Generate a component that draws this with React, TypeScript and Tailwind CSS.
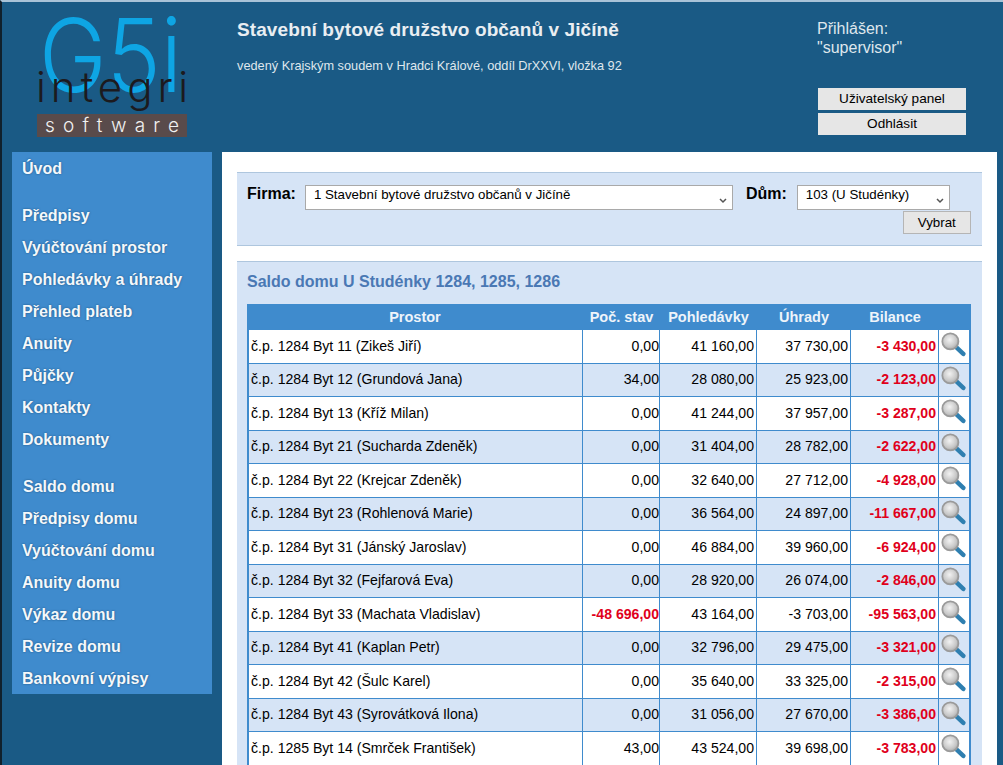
import clsx from "clsx"

const menuTop = ["Předpisy", "Vyúčtování prostor", "Pohledávky a úhrady", "Přehled plateb", "Anuity", "Půjčky", "Kontakty", "Dokumenty"]
const menuHouse = ["Saldo domu", "Předpisy domu", "Vyúčtování domu", "Anuity domu", "Výkaz domu", "Revize domu", "Bankovní výpisy"]

const rows = [
  ["č.p. 1284 Byt 11 (Zikeš Jiří)", "0,00", "41 160,00", "37 730,00", "-3 430,00"],
  ["č.p. 1284 Byt 12 (Grundová Jana)", "34,00", "28 080,00", "25 923,00", "-2 123,00"],
  ["č.p. 1284 Byt 13 (Kříž Milan)", "0,00", "41 244,00", "37 957,00", "-3 287,00"],
  ["č.p. 1284 Byt 21 (Sucharda Zdeněk)", "0,00", "31 404,00", "28 782,00", "-2 622,00"],
  ["č.p. 1284 Byt 22 (Krejcar Zdeněk)", "0,00", "32 640,00", "27 712,00", "-4 928,00"],
  ["č.p. 1284 Byt 23 (Rohlenová Marie)", "0,00", "36 564,00", "24 897,00", "-11 667,00"],
  ["č.p. 1284 Byt 31 (Jánský Jaroslav)", "0,00", "46 884,00", "39 960,00", "-6 924,00"],
  ["č.p. 1284 Byt 32 (Fejfarová Eva)", "0,00", "28 920,00", "26 074,00", "-2 846,00"],
  ["č.p. 1284 Byt 33 (Machata Vladislav)", "-48 696,00", "43 164,00", "-3 703,00", "-95 563,00"],
  ["č.p. 1284 Byt 41 (Kaplan Petr)", "0,00", "32 796,00", "29 475,00", "-3 321,00"],
  ["č.p. 1284 Byt 42 (Šulc Karel)", "0,00", "35 640,00", "33 325,00", "-2 315,00"],
  ["č.p. 1284 Byt 43 (Syrovátková Ilona)", "0,00", "31 056,00", "27 670,00", "-3 386,00"],
  ["č.p. 1285 Byt 14 (Smrček František)", "43,00", "43 524,00", "39 698,00", "-3 783,00"],
]

// logo keeps its own canvas, the three words overlap on purpose like in the original
const Logo = () => (
  <svg width="156" height="140" viewBox="0 0 156 140" className="block">
    <text x="3" y="90" fill="#0ea5e4" fontSize="102" fontFamily="Inter, sans-serif" fontWeight="300" textLength="143" lengthAdjust="spacingAndGlyphs">
      G5i
    </text>
    <text x="0" y="100" fill="#1c1a1e" fontSize="42" fontFamily="Inter, sans-serif" fontWeight="300" textLength="152" lengthAdjust="spacing">
      integri
    </text>
    <rect x="1" y="112" width="150" height="23" fill="#594b4b" />
    <text x="9" y="130" fill="#f1f1f1" fontSize="19" fontFamily="Inter, sans-serif" fontWeight="300" textLength="134" lengthAdjust="spacing">
      software
    </text>
  </svg>
)

const MagnifierIcon = () => (
  <svg width="25" height="25" viewBox="0 0 28 28" className="block">
    <defs>
      <radialGradient id="glass" cx="45%" cy="40%" r="60%">
        <stop offset="0%" stopColor="#f2f2f2" />
        <stop offset="70%" stopColor="#c8c8c8" />
        <stop offset="100%" stopColor="#a9a9a9" />
      </radialGradient>
    </defs>
    <line x1="17" y1="17" x2="25" y2="24.5" stroke="#2f7fb0" strokeWidth="5" strokeLinecap="round" />
    <circle cx="10.5" cy="10.5" r="9" fill="url(#glass)" stroke="#9a9a9a" strokeWidth="2" />
  </svg>
)

const Chevron = () => (
  <svg width="8" height="6" viewBox="0 0 8 6" className="absolute right-[5px] top-[12px]">
    <path d="M1 1l3 3 3-3" fill="none" stroke="#555" strokeWidth="1.5" />
  </svg>
)

const MenuItem = ({ label, extra }: { label: string; extra?: boolean }) => (
  <div className={clsx("flex h-8 items-center text-base font-bold text-[#f4f8fb] [text-shadow:0_0_2px_#1a4f7c]", extra ? "pl-[11px]" : "pl-[10px]")}>
    {label}
  </div>
)

export default function App() {
  return (
    <div className="h-[765px] overflow-hidden border-t-2 border-l-2 border-t-[#a9c3d8] border-l-[#10202c] bg-[#1a5a85] font-['Liberation_Sans',Arial,sans-serif]">
      <header className="flex h-[150px]">
        <div className="w-[235px] pl-[34px]">
          <Logo />
        </div>
        <div className="w-[580px] pt-[17px]">
          <h1 className="text-[19px] leading-[22px] font-bold tracking-[0.1px] text-[#e9eef2]">Stavební bytové družstvo občanů v Jičíně</h1>
          <p className="mt-[18px] text-[12.75px] leading-[14px] text-[#dfe7ed]">vedený Krajským soudem v Hradci Králové, oddíl DrXXVI, vložka 92</p>
        </div>
        <div className="pt-[17px]">
          <div className="text-base leading-[19px] text-[#dfe7ed]">
            Přihlášen:
            <br />
            "supervisor"
          </div>
          <div className="mt-[31px] flex flex-col gap-[3px] pl-px">
            <button type="button" className="h-[22px] w-[148px] bg-[#e6e6e6] pt-px text-[13.6px] text-black">Uživatelský panel</button>
            <button type="button" className="h-[22px] w-[148px] bg-[#e6e6e6] pt-px text-[13.6px] text-black">Odhlásit</button>
          </div>
        </div>
      </header>

      <div className="flex items-start pl-[10px]">
        <nav className="h-[542px] w-[200px] bg-[#3f8bcd] pt-px">
          <MenuItem label="Úvod" />
          <div className="mt-[15px]">
            {menuTop.map((m) => (
              <MenuItem key={m} label={m} />
            ))}
          </div>
          <div className="mt-[15px]">
            {menuHouse.map((m, i) => (
              <MenuItem key={m} label={m} extra={i === 0} />
            ))}
          </div>
        </nav>

        <main className="ml-[10px] w-[775px] bg-white px-[15px] pt-5">
          <section className="flex h-[74px] border-y border-[#aec6de] bg-[#d6e4f6] pt-3 pl-[10px]">
            <span className="-mt-px text-base leading-5 font-bold text-black">Firma:</span>
            <div className="relative ml-[9px] h-[25px] w-[428px] border border-[#a9a9a9] bg-white pl-[8px] text-[13.3px] leading-[18px] text-black">
              1 Stavební bytové družstvo občanů v Jičíně
              <Chevron />
            </div>
            <span className="-mt-px ml-[13px] text-base leading-5 font-bold text-black">Dům:</span>
            <div className="ml-[10px] flex flex-col items-end">
              <div className="relative h-[25px] w-[153px] border border-[#a9a9a9] bg-white pl-[8px] text-[13.3px] leading-[18px] text-black">
                103 (U Studénky)
                <Chevron />
              </div>
              <button type="button" className="mt-[1px] mr-[-21px] h-[23px] w-[68px] border border-[#b5b5b5] bg-[#e6e6e6] text-[13.3px] text-black">
                Vybrat
              </button>
            </div>
          </section>

          <section className="mt-[15px] border-t border-[#aec6de] bg-[#d6e4f6] px-[10px] pb-6">
            <h2 className="pt-[10px] pb-[13px] text-base leading-[19px] font-bold text-[#4a78b4]">Saldo domu U Studénky 1284, 1285, 1286</h2>
            <table className="w-[724px] table-fixed border-separate border-spacing-0 bg-[#3f8bcd] text-[14.1px] text-black">
              <colgroup>
                <col className="w-[336px]" />
                <col className="w-[77px]" />
                <col className="w-[97px]" />
                <col className="w-[94px]" />
                <col className="w-[88px]" />
                <col className="w-[32px]" />
              </colgroup>
              <thead>
                <tr className="h-[26px] text-[14.5px] font-bold text-[#eef4fa]">
                  <th className="pt-0.5 font-bold">Prostor</th>
                  <th className="pt-0.5 font-bold">Poč. stav</th>
                  <th className="pt-0.5 font-bold">Pohledávky</th>
                  <th className="pt-0.5 font-bold">Úhrady</th>
                  <th className="pt-0.5 font-bold">Bilance</th>
                  <th />
                </tr>
              </thead>
              <tbody>
                {rows.map((r, i) => (
                  <tr key={r[0]} className={clsx("h-[33.5px]", i % 2 === 0 ? "bg-white" : "bg-[#d6e4f6]")}>
                    <td className="border-r border-b border-l-2 border-[#3f8bcd] pl-[2px]">{r[0]}</td>
                    <td className={clsx("border-r border-b border-[#3f8bcd] text-right", r[1].startsWith("-") && "font-bold text-[#e0001b]")}>{r[1]}</td>
                    <td className="border-r border-b border-[#3f8bcd] pr-[2px] text-right">{r[2]}</td>
                    <td className="border-r border-b border-[#3f8bcd] pr-[2px] text-right">{r[3]}</td>
                    <td className="border-r border-b border-[#3f8bcd] pr-[2px] text-right font-bold text-[#e0001b]">{r[4]}</td>
                    <td className="border-r-2 border-b border-[#3f8bcd] pt-0.5 pl-0.5 align-top">
                      <MagnifierIcon />
                    </td>
                  </tr>
                ))}
              </tbody>
            </table>
          </section>
        </main>
      </div>
    </div>
  )
}
